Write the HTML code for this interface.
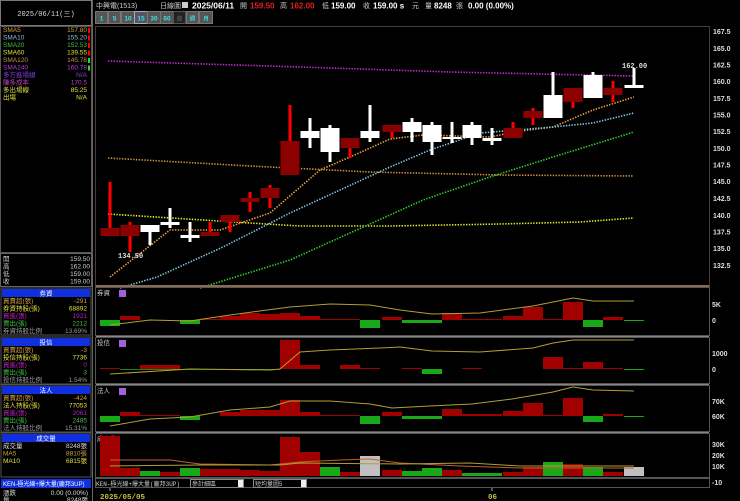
<!DOCTYPE html>
<html><head><meta charset="utf-8"><style>
html,body{margin:0;padding:0;background:#000;width:740px;height:501px;overflow:hidden}
svg{display:block}
text{font-family:"Liberation Sans","Noto Sans CJK TC",sans-serif}
.m{font-family:"Liberation Mono","Noto Sans CJK TC",monospace}
</style></head><body>
<svg width="740" height="501" viewBox="0 0 740 501" xmlns="http://www.w3.org/2000/svg">
<rect width="740" height="501" fill="#000"/>
<!-- left panel -->
<rect x="0.5" y="0.5" width="91" height="25" fill="#000" stroke="#777"/>
<text x="46" y="16" font-size="7" fill="#ddd" text-anchor="middle" class="m">2025/06/11(三)</text>
<rect x="0.5" y="26.5" width="91" height="226" fill="#000" stroke="#555"/>
<g font-size="6.5" class="m">
<text x="3" y="32" fill="#d0a040">SMA5</text><text x="87" y="32" fill="#d0a040" text-anchor="end">157.80</text>
<text x="3" y="39.5" fill="#80c0e0">SMA10</text><text x="87" y="39.5" fill="#80c0e0" text-anchor="end">155.20</text>
<text x="3" y="47" fill="#40c040">SMA20</text><text x="87" y="47" fill="#40c040" text-anchor="end">152.53</text>
<text x="3" y="54.5" fill="#e0e040">SMA60</text><text x="87" y="54.5" fill="#e0e040" text-anchor="end">139.55</text>
<text x="3" y="62" fill="#c09060">SMA120</text><text x="87" y="62" fill="#c09060" text-anchor="end">145.78</text>
<text x="3" y="69.5" fill="#b040e0">SMA240</text><text x="87" y="69.5" fill="#b040e0" text-anchor="end">160.78</text>
<text x="3" y="77" fill="#8040e0">多方進場線</text><text x="87" y="77" fill="#8040e0" text-anchor="end">N/A</text>
<text x="3" y="84.5" fill="#c040c0">賺多成本</text><text x="87" y="84.5" fill="#c040c0" text-anchor="end">170.5</text>
<text x="3" y="92" fill="#e0e040">多出場線</text><text x="87" y="92" fill="#e0e040" text-anchor="end">85.25</text>
<text x="3" y="99.5" fill="#e0e040">出場</text><text x="87" y="99.5" fill="#e0e040" text-anchor="end">N/A</text>
</g>
<g fill="#f00"><rect x="88" y="28" width="2" height="5"/><rect x="88" y="35.5" width="2" height="5"/><rect x="88" y="43" width="2" height="5"/><rect x="88" y="50.5" width="2" height="5"/></g>
<g fill="#2d2"><rect x="88" y="58" width="2" height="5"/><rect x="88" y="65.5" width="2" height="5"/></g>
<rect x="0.5" y="253.5" width="91" height="33" fill="#000" stroke="#666"/>
<g font-size="6.5" fill="#ccc" class="m">
<text x="3" y="261">開</text><text x="90" y="261" text-anchor="end">159.50</text>
<text x="3" y="268.5">高</text><text x="90" y="268.5" text-anchor="end">162.00</text>
<text x="3" y="276">低</text><text x="90" y="276" text-anchor="end">159.00</text>
<text x="3" y="283.5">收</text><text x="90" y="283.5" text-anchor="end">159.00</text>
</g>
<g class="m" font-size="6.5">
<rect x="1" y="288" width="90" height="47" fill="#000" stroke="#555"/>
<rect x="2" y="289" width="88" height="8" fill="#1030e0"/><text x="46" y="295.5" fill="#fff" text-anchor="middle">券資</text>
<text x="3" y="303" fill="#d0a040">買賣超(張)</text><text x="87" y="303" fill="#d0a040" text-anchor="end">-291</text>
<text x="3" y="310.5" fill="#e0e040">券資持股(張)</text><text x="87" y="310.5" fill="#e0e040" text-anchor="end">68892</text>
<text x="3" y="318" fill="#c020c0">買進(張)</text><text x="87" y="318" fill="#c020c0" text-anchor="end">1921</text>
<text x="3" y="325.5" fill="#40c040">賣出(張)</text><text x="87" y="325.5" fill="#40c040" text-anchor="end">2212</text>
<text x="3" y="333" fill="#999">券資持股比例</text><text x="87" y="333" fill="#999" text-anchor="end">13.69%</text>

<rect x="1" y="337" width="90" height="47" fill="#000" stroke="#555"/>
<rect x="2" y="338" width="88" height="8" fill="#1030e0"/><text x="46" y="344.5" fill="#fff" text-anchor="middle">投信</text>
<text x="3" y="352" fill="#d0a040">買賣超(張)</text><text x="87" y="352" fill="#d0a040" text-anchor="end">-3</text>
<text x="3" y="359.5" fill="#e0e040">投信持股(張)</text><text x="87" y="359.5" fill="#e0e040" text-anchor="end">7736</text>
<text x="3" y="367" fill="#c020c0">買進(張)</text><text x="87" y="367" fill="#c020c0" text-anchor="end">0</text>
<text x="3" y="374.5" fill="#40c040">賣出(張)</text><text x="87" y="374.5" fill="#40c040" text-anchor="end">3</text>
<text x="3" y="382" fill="#999">投信持股比例</text><text x="87" y="382" fill="#999" text-anchor="end">1.54%</text>

<rect x="1" y="385" width="90" height="47" fill="#000" stroke="#555"/>
<rect x="2" y="386" width="88" height="8" fill="#1030e0"/><text x="46" y="392.5" fill="#fff" text-anchor="middle">法人</text>
<text x="3" y="400" fill="#d0a040">買賣超(張)</text><text x="87" y="400" fill="#d0a040" text-anchor="end">-424</text>
<text x="3" y="407.5" fill="#e0e040">法人持股(張)</text><text x="87" y="407.5" fill="#e0e040" text-anchor="end">77053</text>
<text x="3" y="415" fill="#c020c0">買進(張)</text><text x="87" y="415" fill="#c020c0" text-anchor="end">2061</text>
<text x="3" y="422.5" fill="#40c040">賣出(張)</text><text x="87" y="422.5" fill="#40c040" text-anchor="end">2485</text>
<text x="3" y="430" fill="#999">法人持股比例</text><text x="87" y="430" fill="#999" text-anchor="end">15.31%</text>

<rect x="1" y="433" width="90" height="44" fill="#000" stroke="#555"/>
<rect x="2" y="434" width="88" height="8" fill="#1030e0"/><text x="46" y="440.5" fill="#fff" text-anchor="middle">成交量</text>
<text x="3" y="448" fill="#ddd">成交量</text><text x="87" y="448" fill="#ddd" text-anchor="end">8248張</text>
<text x="3" y="455.5" fill="#d0a040">MA5</text><text x="87" y="455.5" fill="#d0a040" text-anchor="end">8810張</text>
<text x="3" y="463" fill="#e0e040">MA10</text><text x="87" y="463" fill="#e0e040" text-anchor="end">6815張</text>

<rect x="1" y="479" width="90" height="9" fill="#1030e0"/><text x="3" y="486" fill="#fff" font-size="6">KEN-極光線+爆大量(龐邦3UP)</text>
<text x="3" y="495" fill="#ddd">漲跌</text><text x="88" y="495" fill="#ddd" text-anchor="end">0.00 (0.00%)</text>
<text x="3" y="502" fill="#ddd">量</text><text x="88" y="502" fill="#ddd" text-anchor="end">8248張</text>
</g>
<line x1="92.5" y1="0" x2="92.5" y2="501" stroke="#666"/>

<!-- header -->
<g font-size="7" class="m">
<text x="96" y="8" fill="#ccc">中興電(1513)</text>
<text x="160" y="8" fill="#ccc">日線圖</text>
<rect x="182" y="2" width="6" height="6" fill="#ccc"/>
<text x="192" y="8.5" fill="#fff" font-weight="bold" font-size="8.5">2025/06/11</text>
<text x="240" y="8" fill="#ccc">開</text><text x="250" y="8.5" fill="#e02020" font-weight="bold" font-size="8">159.50</text>
<text x="280" y="8" fill="#ccc">高</text><text x="290" y="8.5" fill="#e02020" font-weight="bold" font-size="8">162.00</text>
<text x="322" y="8" fill="#ccc">低</text><text x="331" y="8.5" fill="#fff" font-weight="bold" font-size="8">159.00</text>
<text x="363" y="8" fill="#ccc">收</text><text x="373" y="8.5" fill="#fff" font-weight="bold" font-size="8">159.00 s</text>
<text x="412" y="8" fill="#ccc">元</text>
<text x="425" y="8" fill="#ccc">量</text><text x="434" y="8.5" fill="#fff" font-weight="bold" font-size="8">8248</text>
<text x="456" y="8" fill="#ccc">張</text>
<text x="468" y="8.5" fill="#fff" font-weight="bold" font-size="8">0.00 (0.00%)</text>
</g>
<g font-size="6.5" font-weight="bold" text-anchor="middle">
<rect x="95" y="11" width="118" height="13" fill="#444"/>
<rect x="95.5" y="11.5" width="12" height="12" fill="#555" stroke="#777"/><text x="101.5" y="20.5" fill="#4dd">1</text>
<rect x="108.5" y="11.5" width="12" height="12" fill="#555" stroke="#777"/><text x="114.5" y="20.5" fill="#4dd">5</text>
<rect x="121.5" y="11.5" width="13" height="12" fill="#555" stroke="#777"/><text x="128" y="20.5" fill="#4dd">10</text>
<rect x="134.5" y="11.5" width="13" height="12" fill="#556" stroke="#aaa"/><text x="141" y="20.5" fill="#4dd">15</text>
<rect x="147.5" y="11.5" width="13" height="12" fill="#555" stroke="#777"/><text x="154" y="20.5" fill="#4dd">30</text>
<rect x="160.5" y="11.5" width="13" height="12" fill="#555" stroke="#777"/><text x="167" y="20.5" fill="#4dd">60</text>
<rect x="173.5" y="11.5" width="12" height="12" fill="#222" stroke="#555"/><text x="179.5" y="20.5" fill="#666" font-size="5.5">日</text>
<rect x="186.5" y="11.5" width="12" height="12" fill="#555" stroke="#777"/><text x="192.5" y="20.5" fill="#4dd" font-size="5.5">週</text>
<rect x="199.5" y="11.5" width="13" height="12" fill="#555" stroke="#777"/><text x="206" y="20.5" fill="#4dd" font-size="5.5">月</text>
</g>

<rect x="95.5" y="26.5" width="614" height="260" fill="none" stroke="#503838"/>
<g font-size="7" fill="#ddd" class="m" font-weight="bold">
<text x="713" y="34">167.5</text><text x="713" y="51">165.0</text><text x="713" y="67.5">162.5</text><text x="713" y="84">160.0</text><text x="713" y="101">157.5</text><text x="713" y="117.5">155.0</text><text x="713" y="134">152.5</text><text x="713" y="151">150.0</text><text x="713" y="167.5">147.5</text><text x="713" y="184">145.0</text><text x="713" y="201">142.5</text><text x="713" y="218">140.0</text><text x="713" y="234.5">137.5</text><text x="713" y="251">135.0</text><text x="713" y="268">132.5</text>
</g>
<g fill="none" stroke-width="1.6" stroke-dasharray="1.4,1.4">
<polyline stroke="#c030d0" points="108,61 300,67 450,72 634,76"/>
<polyline stroke="#d09040" points="108,158 250,166 370,172 500,175 634,176"/>
<polyline stroke="#e8e830" points="108,214 250,223 300,226 390,226 500,224 580,222 634,218"/>
<polyline stroke="#f0a040" points="110,277 170,230 220,230 270,213 320,170 350,157 390,139 423,135 490,137 520,131 553,127 593,110 634,97"/>
<polyline stroke="#80c8e8" points="120,288 157,277 223,247 290,213 390,167 430,150 480,133 553,127 593,123 634,113"/>
<polyline stroke="#30d030" points="200,288 290,260 390,215 423,200 490,177 553,157 634,132"/>
</g>
<line x1="96" y1="286" x2="709" y2="286" stroke="#8a6a50" stroke-width="2"/>
<!-- candles: red wicks -->
<g fill="#f00">
<rect x="108.5" y="182" width="3" height="54"/><rect x="128.5" y="222" width="3" height="30"/><rect x="208.5" y="222" width="3" height="13"/><rect x="228.5" y="215" width="3" height="17"/><rect x="248.5" y="192" width="3" height="20"/><rect x="268.5" y="185" width="3" height="23"/><rect x="288.5" y="105" width="3" height="70"/><rect x="348.5" y="138" width="3" height="20"/><rect x="390.5" y="125" width="3" height="13"/><rect x="511.5" y="122" width="3" height="16"/><rect x="531.5" y="108" width="3" height="17"/><rect x="571.5" y="88" width="3" height="20"/><rect x="611.5" y="81" width="3" height="21"/>
</g>
<g fill="#8b0000">
<rect x="100.5" y="228" width="19" height="8"/><rect x="120.5" y="225" width="19" height="11"/><rect x="200.5" y="232" width="19" height="4"/><rect x="220.5" y="215" width="19" height="7"/><rect x="240.5" y="198" width="19" height="4"/><rect x="260.5" y="188" width="19" height="10"/><rect x="280.5" y="141" width="19" height="34"/><rect x="340.5" y="138" width="19" height="10"/><rect x="382.5" y="125" width="19" height="7"/><rect x="503.5" y="128" width="19" height="10"/><rect x="523.5" y="111" width="19" height="7"/><rect x="563.5" y="88" width="19" height="14"/><rect x="603.5" y="88" width="19" height="7"/>
</g>
<g fill="#fff">
<rect x="148.5" y="225" width="3" height="20"/><rect x="140.5" y="225" width="19" height="7"/>
<rect x="168.5" y="208" width="3" height="20"/><rect x="160.5" y="222" width="19" height="3"/>
<rect x="188.5" y="222" width="3" height="20"/><rect x="180.5" y="235" width="19" height="3"/>
<rect x="308.5" y="118" width="3" height="30"/><rect x="300.5" y="131" width="19" height="7"/>
<rect x="328.5" y="125" width="3" height="37"/><rect x="320.5" y="128" width="19" height="24"/>
<rect x="368.5" y="105" width="3" height="37"/><rect x="360.5" y="131" width="19" height="7"/>
<rect x="410.5" y="118" width="3" height="24"/><rect x="402.5" y="122" width="19" height="10"/>
<rect x="430.5" y="122" width="3" height="33"/><rect x="422.5" y="125" width="19" height="17"/>
<rect x="450.5" y="122" width="3" height="21"/><rect x="442.5" y="137" width="19" height="2"/>
<rect x="470.5" y="122" width="3" height="23"/><rect x="462.5" y="125" width="19" height="13"/>
<rect x="490.5" y="128" width="3" height="17"/><rect x="482.5" y="138" width="19" height="3"/>
<rect x="551.5" y="72" width="3" height="46"/><rect x="543.5" y="95" width="19" height="23"/>
<rect x="591.5" y="72" width="3" height="26"/><rect x="583.5" y="75" width="19" height="23"/>
<rect x="632.5" y="68" width="3" height="20"/><rect x="624.5" y="85" width="19" height="3"/>
</g>
<text x="118" y="258" font-size="7" fill="#ddd" font-weight="bold" class="m">134.50</text>
<text x="622" y="68" font-size="7" fill="#ddd" font-weight="bold" class="m">162.00</text>

<g fill="none" stroke="#555">
<rect x="95.5" y="287.5" width="614" height="48"/>
<rect x="95.5" y="337.5" width="614" height="46"/>
<rect x="95.5" y="385.5" width="614" height="46"/>
<rect x="95.5" y="433.5" width="614" height="44"/>
</g>
<line x1="96" y1="336.5" x2="709" y2="336.5" stroke="#888"/>
<line x1="96" y1="384.5" x2="709" y2="384.5" stroke="#888"/>
<line x1="96" y1="432.5" x2="709" y2="432.5" stroke="#888"/>
<g font-size="6.5" fill="#ccc">
<text x="97" y="295">券資</text><text x="97" y="345">投信</text><text x="97" y="393">法人</text><text x="97" y="441">成交量</text>
</g>
<g fill="#a060e0"><rect x="119" y="290" width="7" height="7"/><rect x="119" y="340" width="7" height="7"/><rect x="119" y="388" width="7" height="7"/></g>
<g font-size="7" fill="#ddd" class="m" font-weight="bold">
<text x="712" y="307">5K</text><text x="712" y="323">0</text>
<text x="712" y="356">1000</text><text x="712" y="372">0</text>
<text x="712" y="404">70K</text><text x="712" y="419">60K</text>
<text x="712" y="447">30K</text><text x="712" y="458">20K</text><text x="712" y="469">10K</text><text x="712" y="485">-10</text>
</g>
<!-- panel 1 bars -->
<g fill="#a00000">
<rect x="120" y="316" width="20" height="4"/><rect x="200" y="319" width="20" height="1"/><rect x="220" y="316" width="20" height="4"/><rect x="240" y="313" width="20" height="7"/><rect x="260" y="314" width="20" height="6"/><rect x="280" y="313" width="20" height="7"/><rect x="300" y="316" width="20" height="4"/><rect x="320" y="319" width="20" height="1"/><rect x="340" y="319" width="20" height="1"/><rect x="382" y="317" width="20" height="3"/><rect x="442" y="313" width="20" height="7"/><rect x="462" y="319" width="20" height="1"/><rect x="482" y="319" width="20" height="1"/><rect x="503" y="316" width="20" height="4"/><rect x="523" y="307" width="20" height="13"/><rect x="543" y="319" width="20" height="1"/><rect x="563" y="302" width="20" height="18"/><rect x="603" y="317" width="20" height="3"/>
</g>
<g fill="#18a818">
<rect x="100" y="320" width="20" height="6"/><rect x="180" y="320" width="20" height="4"/><rect x="360" y="320" width="20" height="8"/><rect x="402" y="320" width="20" height="3"/><rect x="422" y="320" width="20" height="3"/><rect x="583" y="320" width="20" height="7"/><rect x="624" y="320" width="20" height="1"/>
</g>
<!-- panel 2 bars -->
<g fill="#a00000">
<rect x="100" y="368" width="20" height="1"/><rect x="140" y="365" width="20" height="4"/><rect x="160" y="365" width="20" height="4"/><rect x="280" y="340" width="20" height="29"/><rect x="300" y="365" width="20" height="4"/><rect x="340" y="365" width="20" height="4"/><rect x="360" y="368" width="20" height="1"/><rect x="402" y="368" width="20" height="1"/><rect x="462" y="368" width="20" height="1"/><rect x="543" y="357" width="20" height="12"/><rect x="563" y="368" width="20" height="1"/><rect x="583" y="362" width="20" height="7"/><rect x="603" y="368" width="20" height="1"/>
</g>
<g fill="#18a818"><rect x="422" y="369" width="20" height="5"/><rect x="120" y="369" width="160" height="0.8"/><rect x="624" y="369" width="20" height="1"/></g>
<!-- panel 3 bars -->
<g fill="#a00000">
<rect x="120" y="412" width="20" height="4"/><rect x="140" y="415" width="20" height="1"/><rect x="160" y="415" width="20" height="1"/><rect x="220" y="412" width="20" height="4"/><rect x="240" y="410" width="20" height="6"/><rect x="260" y="410" width="20" height="6"/><rect x="280" y="400" width="20" height="16"/><rect x="300" y="412" width="20" height="4"/><rect x="320" y="415" width="20" height="1"/><rect x="340" y="415" width="20" height="1"/><rect x="382" y="412" width="20" height="4"/><rect x="442" y="409" width="20" height="7"/><rect x="462" y="414" width="20" height="2"/><rect x="482" y="414" width="20" height="2"/><rect x="503" y="411" width="20" height="5"/><rect x="523" y="403" width="20" height="13"/><rect x="543" y="415" width="20" height="1"/><rect x="563" y="398" width="20" height="18"/><rect x="603" y="414" width="20" height="2"/>
</g>
<g fill="#18a818">
<rect x="100" y="416" width="20" height="6"/><rect x="180" y="416" width="20" height="4"/><rect x="360" y="416" width="20" height="8"/><rect x="402" y="416" width="20" height="3"/><rect x="422" y="416" width="20" height="3"/><rect x="583" y="416" width="20" height="6"/><rect x="624" y="416" width="20" height="1"/>
</g>
<!-- volume -->
<g fill="#a00000">
<rect x="100" y="436" width="20" height="40"/><rect x="120" y="468" width="20" height="8"/><rect x="160" y="472" width="20" height="4"/><rect x="200" y="469" width="20" height="7"/><rect x="220" y="469" width="20" height="7"/><rect x="240" y="470" width="20" height="6"/><rect x="260" y="471" width="20" height="5"/><rect x="280" y="437" width="20" height="39"/><rect x="300" y="452" width="20" height="24"/><rect x="340" y="472" width="20" height="4"/><rect x="382" y="470" width="20" height="6"/><rect x="442" y="470" width="20" height="6"/><rect x="503" y="472" width="20" height="4"/><rect x="523" y="467" width="20" height="9"/><rect x="563" y="464" width="20" height="12"/><rect x="603" y="472" width="20" height="4"/>
</g>
<g fill="#18a818">
<rect x="140" y="471" width="20" height="5"/><rect x="180" y="468" width="20" height="8"/><rect x="320" y="467" width="20" height="9"/><rect x="402" y="471" width="20" height="5"/><rect x="422" y="468" width="20" height="8"/><rect x="462" y="473" width="20" height="3"/><rect x="482" y="473" width="20" height="3"/><rect x="543" y="462" width="20" height="14"/><rect x="583" y="467" width="20" height="9"/>
</g>
<g fill="#c0c0c0"><rect x="360" y="456" width="20" height="20"/><rect x="624" y="467" width="20" height="9"/></g>
<g fill="none" stroke-width="1">
<polyline stroke="#b0a030" points="110,325 150,320 190,321 230,315 290,307 330,304 370,305 400,310 432,314 480,313 533,306 553,302 573,298 593,301 634,301"/>
<polyline stroke="#b0a030" points="110,374 190,369 270,370 280,369 300,352 330,350 380,348 400,347 432,351 480,352 533,348 553,343 573,340 634,340"/>
<polyline stroke="#b0a030" points="110,426 150,419 190,417 230,410 270,407 290,401 330,401 370,404 392,408 430,406 472,404 512,399 553,392 573,387 593,390 634,391"/>
<polyline stroke="#c06030" points="110,460 170,460 200,464 270,465 300,462 340,460 370,459 400,463 460,466 520,468 634,468"/>
<polyline stroke="#b0a030" points="110,466 200,465 280,465 300,463 400,464 470,463 520,466 634,466"/>
</g>
<!-- bottom bar -->
<rect x="95.5" y="478.5" width="614" height="9" fill="#000" stroke="#555"/>
<text x="96" y="486" font-size="6" fill="#ccc" class="m">KEN-極光線+爆大量(龐邦3UP)</text>
<rect x="190.5" y="479.5" width="53" height="8" fill="#000" stroke="#888"/><text x="192" y="486" font-size="6" fill="#ccc">參計細區</text>
<rect x="238" y="480" width="5" height="7" fill="#eee"/>
<rect x="253.5" y="479.5" width="53" height="8" fill="#000" stroke="#888"/><text x="255" y="486" font-size="6" fill="#ccc">短均量圖5</text>
<rect x="301" y="480" width="5" height="7" fill="#eee"/>
<line x1="110" y1="488" x2="110" y2="491" stroke="#aaa"/><line x1="492" y1="488" x2="492" y2="491" stroke="#aaa"/>
<text x="100" y="499" font-size="7.5" fill="#c8c040" font-weight="bold" class="m">2025/05/05</text>
<text x="488" y="499" font-size="7.5" fill="#c8c040" font-weight="bold" class="m">06</text>
</svg>
</body></html>
